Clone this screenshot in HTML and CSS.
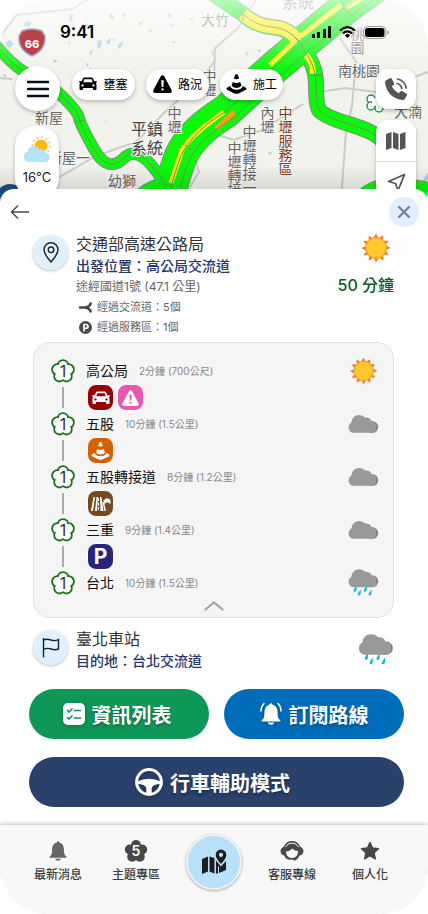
FILE: index.html
```html
<!DOCTYPE html>
<html lang="zh-Hant">
<head>
  <meta charset="UTF-8" />
  <meta name="viewport" content="width=device-width, initial-scale=1.0"/>
  <title>路線資訊</title>
  <link rel="stylesheet" href="styles.css">
</head>
<body>
  <!-- shared icons -->
  <svg class="sprite" aria-hidden="true">
    <symbol id="car" viewBox="0 0 36 26">
      <path fill-rule="evenodd" d="M8 2Q9 0 11 0H25Q27 0 28 2L31 8L33 7Q36 7 36 9Q36 10.500 33.500 10.500Q35 12 35 15V23Q35 25 33 25H30Q28 25 28 22.500V21H8V22.500Q8 25 6 25H3Q1 25 1 23V15Q1 12 2.500 10.500Q0 10.500 0 9Q0 7 3 7L5 8ZM8.500 9.500H27.500L25.300 3.500H10.700ZM7 13.300a2.300 2.300 0 1 0 .01 0ZM29 13.300a2.300 2.300 0 1 0 .01 0Z"/>
    </symbol>
    <symbol id="warn" viewBox="0 0 36 34">
      <path fill-rule="evenodd" d="M15 2Q18-1 21 2L35.500 29Q36.500 33.500 32 34H4Q-.5 33.500 .5 29ZM15.500 10L16.500 22.500H19.500L20.500 10ZM18 25a2.200 2.200 0 1 0 .01 0Z"/>
    </symbol>
    <symbol id="cone" viewBox="0 0 40 38">
      <path d="M17.500 1Q20-.5 22.500 1L25 8.500Q20 11 15 8.500ZM13 15Q20 19 27 15L29.500 22Q27 26.500 20 26.500Q13 26.500 10.500 22ZM8 23Q10 30 20 30Q30 30 32 23L38 26Q40 28 38 30L24 37Q20 38.500 16 37L2 30Q0 28 2 26Z"/>
    </symbol>
    <symbol id="petals" viewBox="0 0 24 24">
      <circle cx="12" cy="6" r="5"/>
      <circle cx="18.200" cy="10.500" r="5"/>
      <circle cx="15.800" cy="17.800" r="5"/>
      <circle cx="8.200" cy="17.800" r="5"/>
      <circle cx="5.800" cy="10.500" r="5"/>
      <circle cx="12" cy="12.500" r="7"/>
    </symbol>
    <symbol id="route1" viewBox="0 0 24 24">
      <g fill="#fff" stroke="#17701c" stroke-width="3.600">
        <circle cx="12" cy="6.400" r="4.400"/>
        <circle cx="17.600" cy="10.500" r="4.400"/>
        <circle cx="15.500" cy="17.200" r="4.400"/>
        <circle cx="8.500" cy="17.200" r="4.400"/>
        <circle cx="6.400" cy="10.500" r="4.400"/>
      </g>
      <g fill="#fff">
        <circle cx="12" cy="6.400" r="4.400"/>
        <circle cx="17.600" cy="10.500" r="4.400"/>
        <circle cx="15.500" cy="17.200" r="4.400"/>
        <circle cx="8.500" cy="17.200" r="4.400"/>
        <circle cx="6.400" cy="10.500" r="4.400"/>
        <circle cx="12" cy="12.300" r="6.500"/>
      </g>
      <text class="route-num" x="12" y="18" text-anchor="middle">1</text>
    </symbol>
    <symbol id="sun" viewBox="0 0 36 36">
      <path fill="#f4742b" d="M35.500 18L29.600 20.500L33 27L26.800 25.500L26.800 33.200L21.500 29.200L18 35.500L15.300 29.700L9.200 33.200L9.800 26.800L3 26.800L6.600 21.500L.5 18L6.400 15.300L3 9.200L9.300 9.800L9.200 3L14.500 6.600L18 .5L20.700 6.400L26.800 3L26.300 9.300L33 9.200L29.400 14.500Z"/>
      <circle cx="18" cy="18" r="13" fill="#f9a825"/>
      <circle cx="18" cy="18" r="11.500" fill="#ffc82e"/>
    </symbol>
    <symbol id="cloud-shape" viewBox="0 0 33 20">
      <path fill="#7e7e7e" d="M26 7a6.200 6.200 0 0 1 0 12.500h-4z"/>
      <path fill="#999" d="M6.300 19.500A6 6 0 0 1 3.500 8.300Q4.500 .5 12 .3Q16 .3 18.300 3Q24 2.500 25 6.800Q30.500 7.500 30.500 13Q30.500 19.500 25.500 19.500Z"/>
    </symbol>
    <symbol id="cloud" viewBox="0 0 33 30">
      <use href="#cloud-shape" y="5" width="33" height="20"/>
    </symbol>
    <symbol id="rain" viewBox="0 0 33 30">
      <use href="#cloud-shape" y="0" width="33" height="20"/>
      <path fill="#12b8d6" d="M9 17.500V22.500Q8 25 6 24Q5.300 22.500 9 17.500ZM13.500 22V26.500Q12.500 29 10.500 28Q10 26.500 13.500 22ZM20 17.500V22.500Q19 25 17 24Q16.300 22.500 20 17.500ZM25 22V26.500Q24 29 22 28Q21.500 26.500 25 22Z"/>
    </symbol>
    <symbol id="bell" viewBox="0 0 24 26">
      <path d="M12 0Q13.500 0 13.700 1.600Q19.500 3.200 19.800 10Q20 16.500 21 18.300Q23.500 20 23.500 22H.5Q.5 20 3 18.300Q4 16.500 4.200 10Q4.500 3.200 10.300 1.600Q10.500 0 12 0ZM8 23.300H16Q15 26 12 26Q9 26 8 23.300Z"/>
    </symbol>
  </svg>

  <div class="phone">
    <header class="map">
      <svg class="map-canvas" viewBox="0 0 428 202" preserveAspectRatio="xMidYMin slice" aria-hidden="true">
        <defs>
          <linearGradient id="fade" x1="0" y1="0" x2="0" y2="1">
            <stop offset="0" stop-color="#fff" stop-opacity=".7"/>
            <stop offset="1" stop-color="#fff" stop-opacity="0"/>
          </linearGradient>
          <linearGradient id="shade" x1="0" y1="0" x2="0" y2="1">
            <stop offset="0" stop-color="#000" stop-opacity="0"/>
            <stop offset="1" stop-color="#000" stop-opacity=".12"/>
          </linearGradient>
        </defs>
        <rect width="428" height="202" fill="#f3f3ee"/>
        <g fill="#aed3e4">
          <path d="M27 21l5 2-3 4-6-1zM5 43l5-3 4 4-5 4zM70 14l3 1-1 7-3-2zM85 23l5 2-1 3-5-2zM110 13l4 3-1 4-4-3zM121 15l5-3-2 6zM138 23l6-2-3 5zM149 29l4 2-4 1zM167 12l5 3-3 4zM169 25l5-1-3 3zM189 19l5-2-2 4zM98 40l4 1-2 8-3-2zM107 40l4-2-1 6h-4zM113 38l2 0-1 4zM118 45l5-4-1 5-4 3zM89 52l4-2-2 6zM86 63l3 1-2 3zM53 59l5 2-4 2zM67 42l4 0-2 2zM172 42l4-1-2 3zM212 50l2 3-2 3zM2 76l3-2 2 3zM89 69l2-2v3zM245 52l4 1-2 3zM258 49l3 1-2 3zM105 121l2 0-1 2zM268 153l5-2-3 4z"/>
          <path d="M421 183l7-11v7l-5 6z"/>
        </g>
        <g class="road-minor">
          <path d="M0 36L17 15L72 9L94-4"/>
          <path d="M214 62L200 80L165 112L136 142L96 156L58 178"/>
          <path d="M256 0L238 28L215 48L214 80"/>
          <path d="M214 134L234 140L262 130L303 104"/>
          <path d="M320 92L345 88L376 92L428 72"/>
          <path d="M340 38L356 62L352 106L346 130L341 202"/>
          <path d="M195 158L199 172L188 190"/>
          <path d="M0 78L12 79"/>
        </g>
        <g class="road-edge">
          <path class="w-small" d="M-5 44Q14 68 32 76T64 98T79 118T94 149T124 158T166 186"/>
          <path class="w-mid" d="M205-12L243 14Q256 26 272 27T300 42"/>
          <path class="w-mid" d="M302 48Q316 64 316 84T319 110T352 125T384 145"/>
          <path class="w-mid" d="M360 202Q372 178 428 190"/>
          <path class="w-large" d="M392-26L345 8L276 66L225 112Q186 136 178 164L166 202"/>
          <path class="w-mid" d="M136 202Q150 183 180 184"/>
        </g>
        <g class="road">
          <path class="w-small" d="M-5 44Q14 68 32 76T64 98T79 118T94 149T124 158T166 186"/>
          <path class="w-mid" d="M205-12L243 14Q256 26 272 27T300 42"/>
          <path class="w-mid" d="M302 48Q316 64 316 84T319 110T352 125T384 145"/>
          <path class="w-mid" d="M360 202Q372 178 428 190"/>
          <path class="w-large" d="M392-26L345 8L276 66L225 112Q186 136 178 164L166 202"/>
          <path class="w-mid" d="M136 202Q150 183 180 184"/>
        </g>
        <g class="road-slow">
          <path stroke-width="13" d="M243 14Q256 26 272 27T296 38"/>
          <path stroke-width="6" d="M306 55Q313 63 313 74"/>
          <path stroke-width="5" d="M341 5L297 39L270 65M346 8L378-12M224 112Q192 134 182 150L171 183"/>
          <path stroke-width="5" stroke="#ff9d1e" d="M216 129L234 112"/>
        </g>
        <g class="road-line">
          <path d="M-5 44Q14 68 32 76T64 98T79 118T94 149T124 158T166 186"/>
          <path d="M205-12L243 14Q256 26 272 27T300 42"/>
          <path d="M302 48Q316 64 316 84T319 110T352 125T384 145"/>
          <path d="M392-26L345 8L276 66L225 112Q186 136 178 164L166 202"/>
          <path d="M400-20L352 15L283 73L232 119Q194 142 186 168L176 202"/>
          <path d="M243 7V21M292 34L302 46M342 4L350 14M310 75L323 75M75 122L84 120M183 144L192 150"/>
        </g>
        <g class="map-label">
          <text class="faint" x="201" y="25">大竹</text>
          <text class="big faint" x="282" y="8">系統</text>
          <text class="vert faint" x="357" y="27">桃園</text>
          <text x="338" y="76">南桃園</text>
          <text class="vert" x="209" y="69">中壢</text>
          <text x="35" y="123">新屋</text>
          <text x="48" y="163">新屋一</text>
          <text class="big" x="131" y="135">平鎮</text>
          <text class="big" x="131" y="154">系統</text>
          <text class="vert" x="174" y="106">中壢</text>
          <text x="108" y="186">幼獅</text>
          <text class="vert" x="267" y="106">內壢</text>
          <text class="vert service" x="285" y="106">中壢服務區</text>
          <text class="vert" x="249" y="125">中壢轉接一</text>
          <text class="vert" x="234" y="141">中壢轉接二</text>
          <text x="394" y="117">大湳</text>
        </g>
        <g fill="#fff" stroke="#23934f" stroke-width="1.500">
          <circle cx="371" cy="99" r="4"/>
          <circle cx="371" cy="106" r="4"/>
          <circle cx="379" cy="108" r="4"/>
          <circle cx="376" cy="102" r="4" stroke="none"/>
        </g>
        <path d="M0 188Q8 181 18 186V202H0Z" fill="#1d4f85"/>
        <rect width="428" height="70" fill="url(#fade)"/>
        <g>
          <path d="M22 31Q32 27 42 31L45 36Q46 50 32 56Q18 50 19 36Z" fill="#bf4146" stroke="#9aabca" stroke-width="1.500"/>
          <text class="shield-num" x="32" y="48" text-anchor="middle">66</text>
        </g>
        <rect y="165" width="428" height="27" fill="url(#shade)"/>
      </svg>

      <div class="status-bar">
        <span class="time">9:41</span>
        <span class="status-icons">
          <svg width="20" height="12" viewBox="0 0 20 12"><path d="M0 9Q0 8 1 8H2Q3 8 3 9V12H0ZM5 7Q5 6 6 6H7Q8 6 8 7V12H5ZM11 4Q11 3 12 3H13Q14 3 14 4V12H11ZM16 1Q16 0 17 0H18Q19 0 19 1V12H16Z"/></svg>
          <svg width="17" height="12" viewBox="0 0 17 12"><g fill="none" stroke="#000" stroke-width="2"><path d="M1 4.500Q8.500-2.200 16 4.500"/><path d="M3.800 7.500Q8.500 3.200 13.200 7.500"/></g><path d="M8.500 12L5.800 9.200Q8.500 7 11.200 9.200Z"/></svg>
          <svg width="26" height="13" viewBox="0 0 26 13"><rect x=".5" y=".5" width="22.500" height="12" rx="4" fill="none" stroke="#999"/><rect x="2" y="2" width="19.500" height="9" rx="2.500"/><path d="M24.300 4.500Q26 5 26 6.500Q26 8 24.300 8.500Z" fill="#999"/></svg>
        </span>
      </div>

      <div class="map-controls">
        <div class="left-tools">
          <button class="menu-btn" aria-label="選單">
            <svg width="22" height="18" viewBox="0 0 22 18"><path d="M1 2H21M1 9H21M1 16H21" stroke="#06141a" stroke-width="2.600" stroke-linecap="round"/></svg>
          </button>
          <div class="weather">
            <svg width="30" height="30" viewBox="0 0 30 30">
              <circle cx="19" cy="11" r="8.800" fill="none" stroke="#f9b81c" stroke-width="1.500" stroke-dasharray="1.500 3.100"/>
              <circle cx="19" cy="11" r="6.500" fill="#fdb913"/>
              <path d="M6 27A5.500 5.500 0 0 1 5.500 16.500A6.500 6.500 0 0 1 17.500 14.500A5.500 5.500 0 0 1 24 17.500A5 5 0 0 1 24 27Z" fill="#b5e3f8"/>
            </svg>
            <span>16℃</span>
          </div>
        </div>

        <div class="chips">
          <button class="chip"><svg width="18" height="14"><use href="#car"/></svg>壅塞</button>
          <button class="chip"><svg width="19" height="18"><use href="#warn"/></svg>路況</button>
          <button class="chip"><svg width="21" height="20"><use href="#cone"/></svg>施工</button>
        </div>

        <div class="right-tools">
          <button class="call-btn" aria-label="電話">
            <svg width="26" height="26" viewBox="0 0 26 26"><path fill="#555" d="M3 4.500L7 2Q8 1.600 8.600 2.600L11 7Q11.500 8 10.700 8.800L8.800 10.600Q11 15 15.500 17.300L17.300 15.400Q18 14.600 19 15.100L23.300 17.500Q24.400 18.100 23.900 19.200L21.800 23Q21 24.300 19 24Q4.500 21.500 2 7Q1.800 5.300 3 4.500Z"/><path d="M14 7.500Q18 8.500 18.800 12.500M14.500 3Q22 4.500 23.200 12" fill="none" stroke="#555" stroke-width="1.700" stroke-linecap="round"/></svg>
          </button>
          <div class="tool-stack">
            <button aria-label="地圖圖層">
              <svg width="20" height="20" viewBox="0 0 20 20" fill="#555"><path d="M0 3L5.500 1V17L0 19ZM7 1L12.500 3V19L7 17ZM14 3L19.500 1V17L14 19Z"/></svg>
            </button>
            <button aria-label="目前位置">
              <svg width="19" height="19" viewBox="0 0 19 19"><path d="M17.500 1.500L1.500 8.500L8.500 10.500L11 17.500Z" fill="none" stroke="#555" stroke-width="1.800" stroke-linejoin="round"/></svg>
            </button>
          </div>
        </div>
      </div>
    </header>

    <main class="sheet">
      <div class="sheet-bar">
        <button aria-label="返回">
          <svg width="20" height="16" viewBox="0 0 20 16"><path d="M19 8H1.500M8 1.500L1.500 8L8 14.500" fill="none" stroke="#4a4a4a" stroke-width="1.500"/></svg>
        </button>
        <button class="close-btn" aria-label="關閉">
          <svg width="12" height="12" viewBox="0 0 12 12"><path d="M1 1L11 11M11 1L1 11" stroke="#74808e" stroke-width="2.200" stroke-linecap="round"/></svg>
        </button>
      </div>

      <section class="place origin">
        <span class="place-icon">
          <svg width="16" height="21" viewBox="0 0 16 21"><g fill="none" stroke="#1c2328" stroke-width="1.400"><path d="M8 20Q1 12 1 7.800A7 7 0 0 1 15 7.800Q15 12 8 20Z"/><circle cx="8" cy="7.800" r="2.800"/></g></svg>
        </span>
        <div class="place-text">
          <h1>交通部高速公路局</h1>
          <p class="place-role">出發位置：高公局交流道</p>
          <p class="via">途經國道1號 (47.1 公里)</p>
          <ul class="via-list">
            <li><svg width="13" height="13" viewBox="0 0 13 13"><path d="M0 6.500H7M12 1.500Q11 6 6 6.500Q11 7 12 11.500" fill="none" stroke="#4a4a4a" stroke-width="2.600"/></svg>經過交流道：5個</li>
            <li><svg width="13" height="13" viewBox="0 0 13 13"><circle cx="6.500" cy="6.500" r="6.500" fill="#4a4a4a"/><path d="M5 10.500V3.500H7Q9 3.500 9 5.400Q9 7.300 7 7.300H5" fill="none" stroke="#fff" stroke-width="1.700"/></svg>經過服務區：1個</li>
          </ul>
        </div>
        <div class="place-side">
          <svg width="36" height="30"><use href="#sun"/></svg>
          <strong>50 分鐘</strong>
        </div>
      </section>

      <section class="route">
        <ol class="stops">
          <li class="stop">
            <svg class="stop-mark"><use href="#route1"/></svg>
            <h2>高公局</h2><span class="leg">2分鐘 (700公尺)</span>
            <svg class="stop-weather"><use href="#sun"/></svg>
            <div class="stop-events">
              <span class="event jam"><svg width="18" height="14"><use href="#car"/></svg></span>
              <span class="event alert"><svg width="17" height="16"><use href="#warn"/></svg></span>
            </div>
          </li>
          <li class="stop">
            <svg class="stop-mark"><use href="#route1"/></svg>
            <h2>五股</h2><span class="leg">10分鐘 (1.5公里)</span>
            <svg class="stop-weather"><use href="#cloud"/></svg>
            <div class="stop-events">
              <span class="event works"><svg width="19" height="18"><use href="#cone"/></svg></span>
            </div>
          </li>
          <li class="stop">
            <svg class="stop-mark"><use href="#route1"/></svg>
            <h2>五股轉接道</h2><span class="leg">8分鐘 (1.2公里)</span>
            <svg class="stop-weather"><use href="#cloud"/></svg>
            <div class="stop-events">
              <span class="event shoulder">
                <svg width="20" height="14" viewBox="0 0 20 14"><path d="M2.500 0H4L2 14H0ZM5.500 0H7L6 14H4ZM9 0H10.500L12.500 14H9.500ZM11.500 5H13L15 14H13.500Z"/><path d="M7.500 1V13" stroke="#fff" stroke-dasharray="3 1.500"/><path d="M13.500 3L14.500 1.500H18L19.500 3.500V6.500H18V5.500H14.500V6.500H13V4.500L12 3.500Z"/></svg>
              </span>
            </div>
          </li>
          <li class="stop">
            <svg class="stop-mark"><use href="#route1"/></svg>
            <h2>三重</h2><span class="leg">9分鐘 (1.4公里)</span>
            <svg class="stop-weather"><use href="#cloud"/></svg>
            <div class="stop-events">
              <span class="event parking">P</span>
            </div>
          </li>
          <li class="stop">
            <svg class="stop-mark"><use href="#route1"/></svg>
            <h2>台北</h2><span class="leg">10分鐘 (1.5公里)</span>
            <svg class="stop-weather"><use href="#rain"/></svg>
          </li>
        </ol>
        <button class="collapse-btn" aria-label="收合">
          <svg width="20" height="10" viewBox="0 0 20 10"><path d="M1.500 8.500L10 1.500L18.500 8.500" fill="none" stroke="#a3a3a3" stroke-width="2.200" stroke-linecap="round"/></svg>
        </button>
      </section>

      <section class="place destination">
        <span class="place-icon">
          <svg width="18" height="21" viewBox="0 0 18 21"><path d="M1.500 20.500V1M1.500 3Q5 1.500 9 3T16.500 2.500V12Q13 13.500 9 12T1.500 12.500" fill="none" stroke="#1c2328" stroke-width="1.400"/></svg>
        </span>
        <div class="place-text">
          <h1>臺北車站</h1>
          <p class="place-role">目的地：台北交流道</p>
        </div>
        <div class="place-side">
          <svg width="36" height="32"><use href="#rain"/></svg>
        </div>
      </section>

      <div class="actions">
        <button class="action list">
          <svg width="22" height="22" viewBox="0 0 22 22"><rect width="22" height="22" rx="5"/><path d="M4.500 7.500L6 9L9 6M4.500 14.500L6 16L9 13M11.500 7.500H17.500M11.500 15H17.500" fill="none" stroke="#0f9757" stroke-width="1.700" stroke-linecap="round"/></svg>
          資訊列表
        </button>
        <button class="action subscribe">
          <svg width="22" height="24" viewBox="0 0 22 24"><use href="#bell" x="1" y="0" width="20" height="24"/><path d="M1 9Q1 4.500 4 1.500M21 9Q21 4.500 18 1.500" fill="none" stroke="#fff" stroke-width="1.500" stroke-linecap="round"/></svg>
          訂閱路線
        </button>
        <button class="action drive">
          <svg width="28" height="28" viewBox="0 0 28 28"><circle cx="14" cy="14" r="12.400" fill="none" stroke="#fff" stroke-width="3"/><path d="M2 13.500Q8 10.800 14 10.800T26 13.500V16Q18 16 16.700 20V26H11.300V20Q10 16 2 16Z"/></svg>
          行車輔助模式
        </button>
      </div>
    </main>

    <nav class="tab-bar">
      <a href="#news">
        <svg width="18" height="20" class="soft"><use href="#bell"/></svg>
        最新消息
      </a>
      <a href="#topics">
        <svg width="24" height="24" viewBox="0 0 24 24"><use href="#petals"/><text class="topic-num" x="12" y="17" text-anchor="middle">5</text></svg>
        主題專區
      </a>
      <a href="#map" class="tab-map" aria-label="地圖">
        <svg width="26" height="26" viewBox="0 0 26 26" fill="#1d1d1d"><path d="M1 10L7 7.500V22.500L1 25ZM8.500 7.500L13.500 9V24.500L8.500 22.500ZM15 11.500L20 17.500L25 12V21L18 24V18L17 17V24.500H15Z"/><path fill-rule="evenodd" d="M20 0.500A5.300 5.300 0 0 1 25.300 5.800Q25.300 9.500 20 15Q14.700 9.500 14.700 5.800A5.300 5.300 0 0 1 20 .5ZM20 3.800a2.100 2.100 0 1 0 .01 0Z"/></svg>
      </a>
      <a href="#service">
        <svg width="24" height="22" viewBox="0 0 24 22"><path fill-rule="evenodd" d="M12 1Q18 1 20 6.500Q23.500 8 23.500 11.500Q23 15 19.500 15.500Q18 19.500 14 21L13.500 19.500Q6 21 4.300 15.500Q1 15 .5 11.500Q.5 8 4 6.500Q6 1 12 1ZM6 11.500Q6 18 12 18Q18 18 18 11Q14.500 11 12.500 8.500Q10 11 6 11.500Z"/><path d="M5.500 7Q7.500 3 12 3T18.500 7" fill="none" stroke="#f8f8f8"/></svg>
        客服專線
      </a>
      <a href="#personal">
        <svg width="20" height="20" viewBox="0 0 20 20"><path d="M10 1.500L12.500 7L18.500 7.700L14 11.700L15.300 17.800L10 14.700L4.700 17.800L6 11.700L1.500 7.700L7.500 7Z" stroke="#484848" stroke-width="1.500" stroke-linejoin="round"/></svg>
        個人化
      </a>
    </nav>
  </div>
</body>
</html>
```
FILE: styles.css
```css
* {
  margin: 0;
  padding: 0;
  box-sizing: border-box;
}

body {
  background: #fff;
  color: #222;
  font-family: Inter, "Noto Sans CJK TC", sans-serif;
}

button {
  border: none;
  background: none;
  color: inherit;
  font: inherit;
  cursor: pointer;
  display: flex;
  align-items: center;
  justify-content: center;
}

a {
  color: inherit;
  text-decoration: none;
}

ul,
ol {
  list-style: none;
}

svg {
  display: block;
  flex-shrink: 0;
}

.sprite {
  position: absolute;
  width: 0;
  height: 0;
}

.phone {
  min-height: 100vh;
  display: flex;
  flex-direction: column;
  border-radius: 48px;
  overflow: hidden;
}

/* map */
.map {
  position: relative;
  overflow: hidden;
}

.map-canvas {
  position: absolute;
  inset: 0;
  width: 100%;
  height: 100%;
}

.road-minor {
  fill: none;
  stroke: #cbcbc8;
  stroke-width: 2;
}

.road-edge {
  fill: none;
  stroke: #858c80;
}

.road {
  fill: none;
  stroke: #0bf80b;
}

.road .w-small { stroke-width: 10px; }
.road .w-mid { stroke-width: 14px; }
.road .w-large { stroke-width: 32px; }
.road-edge .w-small { stroke-width: 12px; }
.road-edge .w-mid { stroke-width: 16px; }
.road-edge .w-large { stroke-width: 34px; }

.road-slow {
  fill: none;
  stroke: #fdee1d;
}

.road-line {
  fill: none;
  stroke: #6f8f60;
  stroke-width: 1;
}

.map-label text {
  font-size: 14px;
  fill: #666;
  stroke: #f6f6f2;
  stroke-width: 2px;
  paint-order: stroke;
}

.map-label .big {
  font-size: 16px;
  fill: #444;
}

.map-label .vert {
  writing-mode: vertical-rl;
}

.map-label .faint {
  fill: #888;
}

.map-label .service {
  fill: #8a3a1c;
}

.shield-num {
  font-size: 11px;
  font-weight: 800;
  fill: #fff;
}

.status-bar {
  position: relative;
  display: flex;
  align-items: center;
  justify-content: space-between;
  padding: 20px 39px 22px 60px;
}

.time {
  font-size: 17px;
  line-height: 24px;
  font-weight: 600;
  color: #000;
}

.status-icons {
  display: flex;
  align-items: center;
  gap: 7px;
}

.map-controls {
  position: relative;
  display: flex;
  align-items: flex-start;
  gap: 12px;
  padding: 0 12px 0 15px;
}

.left-tools {
  display: flex;
  flex-direction: column;
  gap: 15px;
}

.menu-btn,
.chip,
.call-btn,
.weather,
.tool-stack {
  background: #fff;
  box-shadow: 0 2px 4px rgba(0, 0, 0, 0.25);
}

.menu-btn {
  width: 45px;
  height: 45px;
  border-radius: 50%;
}

.weather {
  width: 44px;
  padding: 9px 0;
  border-radius: 20px;
  display: flex;
  flex-direction: column;
  align-items: center;
  font-size: 13px;
  line-height: 24px;
}

.chips {
  flex: 1;
  display: flex;
  gap: 11px;
  padding-top: 3px;
}

.chip {
  width: 63px;
  height: 31px;
  gap: 6px;
  padding-bottom: 2px;
  border-radius: 16px;
  font-size: 12px;
  color: #000;
  white-space: nowrap;
}

.right-tools {
  display: flex;
  flex-direction: column;
  gap: 11px;
  padding-top: 3px;
}

.call-btn {
  width: 40px;
  height: 40px;
  border-radius: 12px;
}

.tool-stack {
  width: 40px;
  border-radius: 12px;
}

.tool-stack button {
  width: 100%;
  height: 41px;
}

.tool-stack button + button {
  border-top: 1px solid #ddd;
}

/* route sheet */
.sheet {
  position: relative;
  flex: 1;
  margin-top: -13px;
  border-radius: 14px 14px 0 0;
  background: #fff;
}

.sheet-bar {
  display: flex;
  align-items: center;
  justify-content: space-between;
  padding: 8px 9px 6px 10px;
}

.close-btn {
  width: 30px;
  height: 30px;
  border-radius: 50%;
  background: #dfedff;
}

.place {
  display: flex;
  align-items: flex-start;
  padding: 0 34px 0 33px;
  gap: 8px;
}

.place-icon {
  width: 35px;
  height: 35px;
  margin-top: 2px;
  border-radius: 50%;
  background: #dff1ff;
  box-shadow: 0 1px 3px rgba(0, 0, 0, 0.25);
  display: flex;
  align-items: center;
  justify-content: center;
}

.place-text {
  flex: 1;
}

.place h1 {
  font-size: 16px;
  line-height: 22px;
  font-weight: 400;
  color: #333;
}

.place-role {
  font-size: 14px;
  line-height: 22px;
  font-weight: 500;
  color: #24386b;
}

.via {
  font-size: 12px;
  line-height: 20px;
  color: #666;
}

.via-list li {
  display: flex;
  align-items: center;
  gap: 5px;
  padding-left: 3px;
  font-size: 11px;
  line-height: 20px;
  color: #666;
}

.place-side {
  display: flex;
  flex-direction: column;
  align-items: flex-end;
  gap: 11px;
}

.place-side strong {
  font-size: 16px;
  line-height: 22px;
  font-weight: 500;
  color: #0b5a31;
}

.route {
  margin: 5px 34px 0 33px;
  border: 1px solid #e2e2e2;
  border-radius: 16px;
  background: #f5f5f5;
}

.stops {
  padding: 16px 13px 0 17px;
}

.stop {
  display: grid;
  grid-template-columns: 24px auto 1fr 33px;
  grid-template-rows: 24px;
  align-items: center;
  column-gap: 11px;
}

.stop:not(:last-child) {
  grid-template-rows: 24px 29px;
}

.stop-mark {
  width: 24px;
  height: 24px;
}

.route-num {
  font-size: 16px;
  fill: #333;
}

.stop h2 {
  font-size: 14px;
  line-height: 24px;
  font-weight: 400;
  color: #111;
}

.leg {
  font-size: 10px;
  line-height: 24px;
  color: #888;
}

.stop-weather {
  width: 33px;
  height: 28px;
}

.stop:not(:last-child)::after {
  content: '';
  grid-column: 1;
  grid-row: 2;
  justify-self: center;
  width: 2px;
  height: 21px;
  background: #aaa;
}

.stop-events {
  grid-column: 2 / 4;
  grid-row: 2;
  display: flex;
  gap: 3px;
  padding-left: 1px;
}

.event {
  width: 27px;
  height: 27px;
  border: 1px solid #fff;
  border-radius: 9px;
  display: flex;
  align-items: center;
  justify-content: center;
  color: #fff;
  fill: #fff;
}

.jam { background: #990004; }
.alert { background: #e858b0; }
.works { background: #d65f00; }
.shoulder { background: #744a22; }

.parking {
  background: #2a2478;
  font-size: 21px;
  font-weight: 700;
}

.collapse-btn {
  width: 100%;
  height: 22px;
}

.destination {
  padding-top: 10px;
  padding-bottom: 17px;
}

.destination .place-side {
  padding-top: 6px;
}

.actions {
  display: grid;
  grid-template-columns: 1fr 1fr;
  gap: 18px 15px;
  padding: 0 24px 18px 29px;
}

.action {
  height: 50px;
  gap: 7px;
  border-radius: 25px;
  font-size: 20px;
  font-weight: 700;
  color: #fff;
  fill: #fff;
  text-shadow: 0 2px 3px rgba(0, 0, 0, 0.3);
}

.action svg {
  filter: drop-shadow(0 1px 2px rgba(0, 0, 0, 0.25));
}

.list {
  padding-right: 4px;
  background: #0f9757;
}

.subscribe {
  background: #006dbb;
}

.drive {
  grid-column: 1 / 3;
  padding-right: 8px;
  background: #2a416c;
}

/* bottom tabs */
.tab-bar {
  position: relative;
  display: grid;
  grid-template-columns: repeat(5, 1fr);
  padding: 11px 19px 30px;
  background: #f8f8f8;
  box-shadow: 0 -1px 4px rgba(0, 0, 0, 0.25);
}

.tab-bar a {
  display: grid;
  grid-template-rows: 30px 18px;
  place-items: center;
  font-size: 12px;
  line-height: 18px;
  font-weight: 500;
  color: #3c3c3c;
  fill: #484848;
}

.tab-bar .soft {
  fill: #666;
}

.topic-num {
  font-size: 14px;
  font-weight: 600;
  fill: #fff;
}

.tab-bar .tab-map {
  display: flex;
  align-items: center;
  justify-content: center;
  justify-self: center;
  width: 56px;
  height: 56px;
  margin: -2px 0 -6px;
  border: 2px solid #f2f2f2;
  border-radius: 50%;
  background: #b9e0f9;
  box-shadow: 0 1px 3px rgba(0, 0, 0, 0.35);
}
```
